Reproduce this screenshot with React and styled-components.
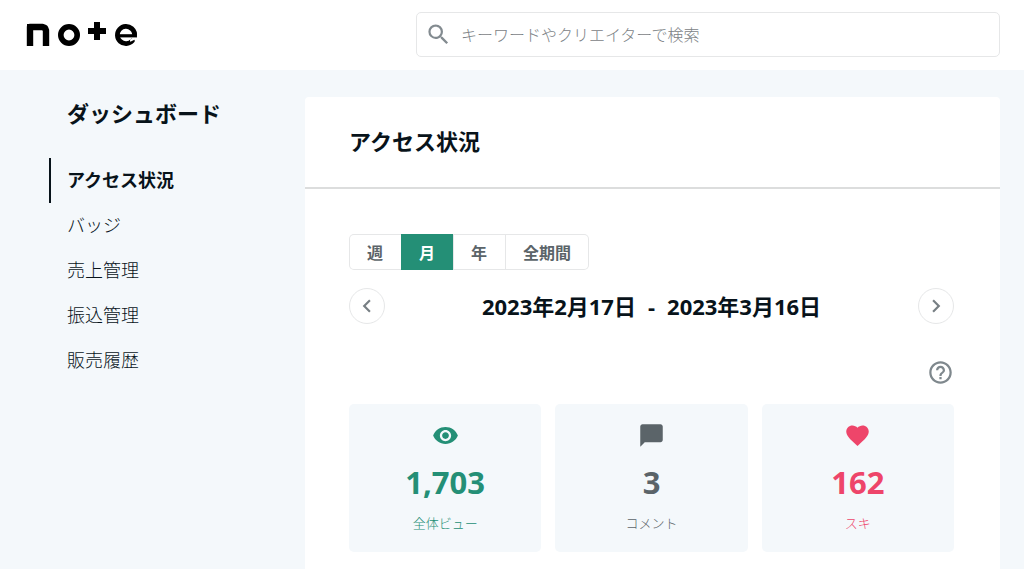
import React, { useState } from "react";
import styled, { createGlobalStyle } from "styled-components";
import {
  MdChatBubble,
  MdChevronLeft,
  MdChevronRight,
  MdFavorite,
  MdHelpOutline,
  MdSearch,
  MdVisibility,
} from "react-icons/md";

const GlobalStyle = createGlobalStyle`
  * {
    box-sizing: border-box;
  }
  body {
    margin: 0;
    background: #f4f8fb;
    color: #08131a;
    font-family: "Open Sans", "Noto Sans CJK JP", sans-serif;
  }
  button,
  input {
    font-family: inherit;
  }
`;

const Page = styled.div`
  min-height: 100vh;
  display: flex;
  flex-direction: column;
`;
const Header = styled.header`
  display: flex;
  align-items: center;
  justify-content: space-between;
  gap: 24px;
  height: 70px;
  padding: 0 24px 1px;
  background: #fff;
`;
const LogoLink = styled.a`
  display: block;
  color: #000;
  line-height: 0;
`;
const SearchBox = styled.label`
  display: flex;
  align-items: center;
  gap: 9px;
  width: 60%;
  max-width: 584px;
  height: 45px;
  padding: 0 8px;
  border: 1px solid #e6e7e8;
  border-radius: 5px;
  color: #838b90;
`;
const SearchInput = styled.input`
  flex: 1;
  min-width: 0;
  padding: 0;
  border: 0;
  outline: 0;
  background: transparent;
  font-size: 16px;
  line-height: 24px;
  color: #08131a;
  &::placeholder {
    color: #7c8286;
    opacity: 1;
    font-weight: 300;
  }
`;

const Content = styled.div`
  flex: 1;
  display: flex;
  padding: 27px 24px 0 49px;
`;
const Sidebar = styled.aside`
  flex: 0 0 256px;
`;
const SidebarTitle = styled.h2`
  margin: 0 0 29px;
  padding-left: 18px;
  font-size: 22px;
  line-height: 32px;
  font-weight: 700;
`;
const NavList = styled.ul`
  margin: 0;
  padding: 0;
  list-style: none;
`;
const NavLink = styled.a`
  display: block;
  padding-left: 16px;
  border-left: 2px solid ${({ $active }) => ($active ? "#08131a" : "transparent")};
  font-size: 18px;
  line-height: 45px;
  font-weight: ${({ $active }) => ($active ? 700 : 300)};
  color: #08131a;
  text-decoration: none;
`;

const Panel = styled.main`
  flex: 1;
  min-width: 0;
  border-radius: 4px 4px 0 0;
  background: #fff;
`;
const PanelHeader = styled.div`
  padding: 27px 44px 28px;
  border-bottom: 2px solid #dcdddd;
`;
const PanelTitle = styled.h1`
  margin: 0;
  font-size: 22px;
  line-height: 35px;
  font-weight: 700;
`;
const PanelBody = styled.div`
  padding: 45px 46px 17px 44px;
`;

const Tabs = styled.div`
  display: flex;
  width: fit-content;
  height: 36px;
  border-radius: 5px;
  box-shadow: inset 0 0 0 1px #e6e7e8;
`;
const Tab = styled.button`
  padding: 0 18px;
  border: 0;
  background: ${({ $active }) => ($active ? "#248f76" : "transparent")};
  color: ${({ $active }) => ($active ? "#fff" : "#5b6469")};
  font-size: 16px;
  font-weight: 700;
  cursor: pointer;
  &:not(:first-child) {
    padding-left: 17px;
    border-left: 1px solid ${({ $active }) => ($active ? "#248f76" : "#e6e7e8")};
  }
`;
const Period = styled.div`
  display: flex;
  align-items: center;
  justify-content: space-between;
  margin-top: 18px;
`;
const RoundButton = styled.button`
  display: flex;
  align-items: center;
  justify-content: center;
  width: 36px;
  height: 36px;
  padding: 0;
  border: 1px solid #e6e7e8;
  border-radius: 50%;
  background: #fff;
  color: #777f84;
  cursor: pointer;
`;
const PeriodText = styled.p`
  display: flex;
  gap: 12px;
  margin: 0;
  font-size: 22px;
  line-height: 36px;
  font-weight: 700;
`;
const HelpRow = styled.div`
  display: flex;
  justify-content: flex-end;
  margin: 35px 0 18px;
`;
const HelpButton = styled.button`
  height: 27px;
  padding: 0;
  border: 0;
  background: none;
  color: #7f888d;
  cursor: pointer;
`;

const Stats = styled.div`
  display: grid;
  grid-template-columns: repeat(3, 1fr);
  gap: 14px;
`;
const Stat = styled.section`
  display: flex;
  flex-direction: column;
  align-items: center;
  height: 148px;
  padding-top: 18px;
  border-radius: 5px;
  background: #f4f8fb;
  color: ${({ $color }) => $color};
`;
const StatValue = styled.strong`
  margin-top: 12px;
  font-size: 31px;
  line-height: 42px;
  font-weight: 700;
`;
const StatLabel = styled.span`
  margin-top: 10px;
  font-size: 13px;
  line-height: 20px;
  font-weight: 300;
`;

const menu = ["アクセス状況", "バッジ", "売上管理", "振込管理", "販売履歴"];
const ranges = ["週", "月", "年", "全期間"];
const stats = [
  { label: "全体ビュー", value: "1,703", color: "#248f76", Icon: MdVisibility },
  { label: "コメント", value: "3", color: "#5b6469", Icon: MdChatBubble },
  { label: "スキ", value: "162", color: "#ee456a", Icon: MdFavorite },
];

function Logo() {
  return (
    <svg width="116" height="29" viewBox="0 0 116 29" fill="none" stroke="currentColor" strokeWidth="6">
      <rect x="3" y="4" width="6" height="22" fill="currentColor" stroke="none" />
      <polyline points="6,26 6,7 18.5,7 21,8 22,10.5 22,26" strokeWidth="6.4" strokeLinejoin="round" />
      <circle cx="45" cy="15" r="8.2" strokeWidth="5.6" />
      <line x1="64" y1="11" x2="82" y2="11" />
      <line x1="73" y1="2" x2="73" y2="20" />
      <circle
        cx="102"
        cy="15"
        r="8.6"
        strokeWidth="4.8"
        pathLength="360"
        strokeDasharray="330 30"
        transform="rotate(42 102 15)"
      />
      <line x1="93" y1="15.8" x2="112.8" y2="15.8" strokeWidth="3.2" />
    </svg>
  );
}

function App() {
  const [range, setRange] = useState("月");

  return (
    <>
      <GlobalStyle />
      <Page lang="ja">
        <Header>
          <LogoLink href="#" aria-label="note">
            <Logo />
          </LogoLink>
          <SearchBox>
            <MdSearch size={27} />
            <SearchInput
              type="text"
              aria-label="検索"
              placeholder="キーワードやクリエイターで検索"
            />
          </SearchBox>
        </Header>
        <Content>
          <Sidebar>
            <SidebarTitle>ダッシュボード</SidebarTitle>
            <NavList>
              {menu.map((item, i) => (
                <li key={item}>
                  <NavLink href="#" $active={i === 0}>
                    {item}
                  </NavLink>
                </li>
              ))}
            </NavList>
          </Sidebar>
          <Panel>
            <PanelHeader>
              <PanelTitle>アクセス状況</PanelTitle>
            </PanelHeader>
            <PanelBody>
              <Tabs>
                {ranges.map((item) => (
                  <Tab key={item} $active={item === range} onClick={() => setRange(item)}>
                    {item}
                  </Tab>
                ))}
              </Tabs>
              <Period>
                <RoundButton aria-label="前の期間">
                  <MdChevronLeft size={26} />
                </RoundButton>
                <PeriodText>
                  <span>2023年2月17日</span>
                  <span>-</span>
                  <span>2023年3月16日</span>
                </PeriodText>
                <RoundButton aria-label="次の期間">
                  <MdChevronRight size={26} />
                </RoundButton>
              </Period>
              <HelpRow>
                <HelpButton aria-label="ヘルプ">
                  <MdHelpOutline size={27} />
                </HelpButton>
              </HelpRow>
              <Stats>
                {stats.map(({ label, value, color, Icon }) => (
                  <Stat key={label} $color={color}>
                    <Icon size={27} />
                    <StatValue>{value}</StatValue>
                    <StatLabel>{label}</StatLabel>
                  </Stat>
                ))}
              </Stats>
            </PanelBody>
          </Panel>
        </Content>
      </Page>
    </>
  );
}

export default App;
